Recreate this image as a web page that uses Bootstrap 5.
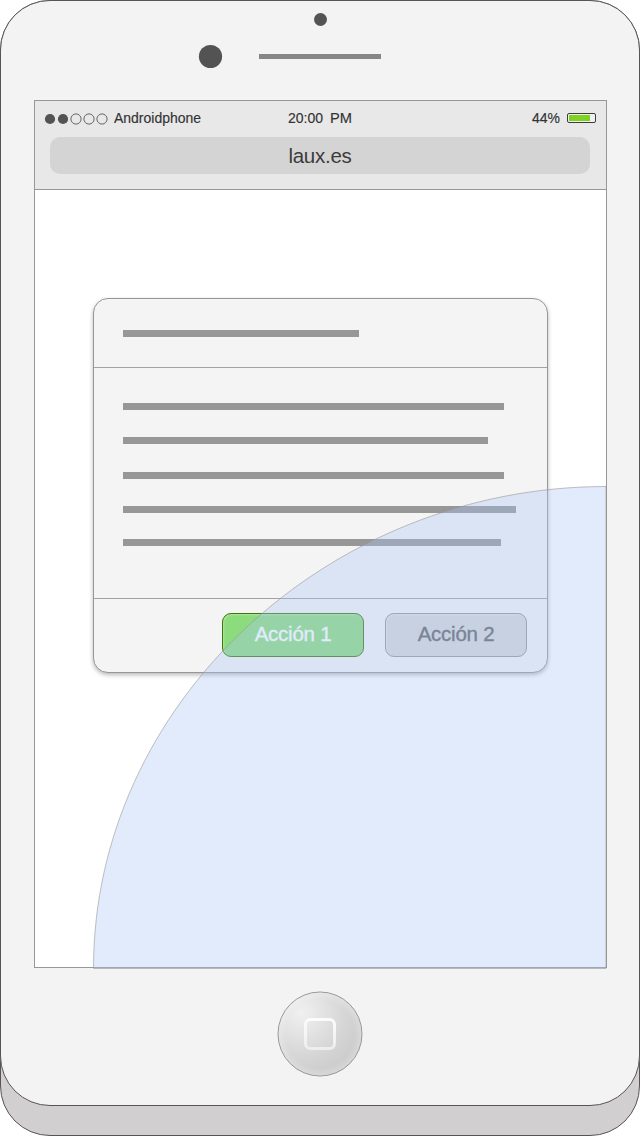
<!DOCTYPE html>
<html lang="es">
<head>
<meta charset="utf-8">
<meta name="viewport" content="width=device-width, initial-scale=1">
<title>laux.es</title>
<link href="https://cdn.jsdelivr.net/npm/bootstrap@5.3.0/dist/css/bootstrap.min.css" rel="stylesheet">
<style>
body { font-family: "Liberation Sans", Arial, sans-serif; background: #fff; color: #3c3c3c; }
.phone { width: 640px; height: 1136px; background: #d1cfcf; border: 1px solid #585354; border-radius: 50px; }
.face { width: 640px; height: 1106px; margin: -1px; background: #f3f3f3; border: 1px solid #585354; border-radius: 50px; }
.sensors { height: 99px; flex: none; }
.sensors svg { margin-left: -1px; margin-top: -1px; }
.screen { width: 573px; height: 868px; margin-left: 33px; border: 1px solid #979797; background: #fff; flex: none; }
.browser-bar { height: 89px; background: #e8e8e8; border-bottom: 1px solid #979797; }
.status { height: 36px; font-size: 14px; line-height: 16px; padding: 9px 10px 0 9px; }
.status text { fill: #333; stroke: #333; stroke-width: .15px; }
.address { height: 37px; margin: 0 16px 0 15px; border-radius: 10px; background: #d4d4d4; font-size: 20.5px; letter-spacing: -.25px; line-height: 38px; }
.dialog-card { width: 455px; height: 375px; margin: 108px 0 0 58px; background: #f4f4f4; border: 1px solid #979797; border-radius: 15px; box-shadow: 0 2px 4px rgba(0,0,0,.28); }
.dialog-head { height: 69px; padding: 31px 0 0 29px; border-bottom: 1px solid #a2a2a2; }
.dialog-text { height: 231px; padding: 35px 0 0 29px; border-bottom: 1px solid #a2a2a2; }
.line { height: 7px; background: #979797; }
.dialog-foot { padding: 14px 20px 0; gap: 21px; }
.action { width: 142px; height: 44px; padding: 0 0 2px; border-radius: 9px; font-size: 20.5px; letter-spacing: -.25px; line-height: 40px; -webkit-text-stroke: .35px currentColor; box-shadow: inset 1px 1px 2px rgba(255,255,255,.3); }
.action-main, .action-main:hover { background: #8cdc7e; border-color: #417505; color: #fff; }
.action-alt, .action-alt:hover { background: #d7d7d7; border-color: #979797; color: #616161; }
.reach { left: 58px; top: 385px; pointer-events: none; }
.home { margin: 23px 0 0 276px; }
</style>
</head>
<body>
<main class="phone">
  <div class="face d-flex flex-column">
    <div class="sensors">
      <svg width="638" height="99" viewBox="0 0 638 99" class="d-block">
        <circle cx="320.5" cy="19.5" r="6.5" fill="#535353"/>
        <circle cx="210.5" cy="56.5" r="11.6" fill="#535353"/>
        <path d="M259 54h122v5H259z" fill="#868686"/>
      </svg>
    </div>
    <div class="screen position-relative">
      <header class="browser-bar">
        <div class="status row g-0">
          <div class="col-5 d-flex">
            <svg width="66" height="18" viewBox="0 0 66 18">
              <g fill="#535353"><circle cx="6" cy="9" r="5.1"/><circle cx="19" cy="9" r="5.1"/></g>
              <g fill="none" stroke="#666" stroke-width="1"><circle cx="32" cy="9" r="5.1"/><circle cx="45" cy="9" r="5.1"/><circle cx="58" cy="9" r="5.1"/></g>
            </svg>
            <svg width="87" height="18" class="ms-1"><text x="0" y="13" textLength="87" lengthAdjust="spacingAndGlyphs">Androidphone</text></svg>
          </div>
          <div class="col-2 text-center"><svg width="66" height="18"><text x="1" y="13" textLength="35" lengthAdjust="spacingAndGlyphs">20:00</text><text x="43" y="13" textLength="22" lengthAdjust="spacingAndGlyphs">PM</text></svg></div>
          <div class="col-5 d-flex justify-content-end">
            <svg width="30" height="18"><text x="1" y="13" textLength="28" lengthAdjust="spacingAndGlyphs">44%</text></svg>
            <svg width="29" height="18" viewBox="0 0 29 18" style="margin-left:6px">
              <rect x=".5" y="3.5" width="28" height="9" rx="1.5" fill="#f0f0f0" stroke="#3c3c3c"/>
              <path d="M2 5h21v6H2z" fill="#7ed321"/>
            </svg>
          </div>
        </div>
        <div class="address text-center">laux.es</div>
      </header>
      <section class="dialog-card">
        <div class="dialog-head"><div class="line" style="width:236px"></div></div>
        <div class="dialog-text">
          <div class="line" style="width:381px"></div>
          <div class="line" style="width:365px;margin-top:27px"></div>
          <div class="line" style="width:381px;margin-top:28px"></div>
          <div class="line" style="width:393px;margin-top:27px"></div>
          <div class="line" style="width:378px;margin-top:26px"></div>
        </div>
        <div class="dialog-foot d-flex justify-content-end">
          <button type="button" class="btn action action-main">Acción 1</button>
          <button type="button" class="btn action action-alt">Acción 2</button>
        </div>
      </section>
      <svg class="reach position-absolute" width="514" height="484" viewBox="0 0 514 484">
        <path d="M.5 482.5C.5 219 234 .5 513 .5V482.5Z" fill="rgb(169,198,246)" fill-opacity=".35" stroke="#979797" stroke-opacity=".6"/>
      </svg>
    </div>
    <svg class="home" width="88" height="88" viewBox="0 0 88 88">
      <defs>
        <radialGradient id="dome" cx=".28" cy=".25" r=".85"><stop offset="0" stop-color="#f0f0f0"/><stop offset=".65" stop-color="#d4d4d4"/><stop offset="1" stop-color="#c9c9c9"/></radialGradient>
        <radialGradient id="rim"><stop offset=".82" stop-color="#fff" stop-opacity="0"/><stop offset="1" stop-color="#fff" stop-opacity=".25"/></radialGradient>
        <linearGradient id="key" x2="0" y2="1"><stop offset="0" stop-color="#fcfcfc"/><stop offset="1" stop-color="#ededed"/></linearGradient>
      </defs>
      <circle cx="43" cy="43" r="42" fill="url(#dome)" stroke="#979797"/>
      <circle cx="43" cy="43" r="41.5" fill="url(#rim)"/>
      <rect x="28.5" y="28.5" width="29" height="29" rx="5" fill="none" stroke="url(#key)" stroke-width="3"/>
    </svg>
  </div>
</main>
<script src="https://cdn.jsdelivr.net/npm/bootstrap@5.3.0/dist/js/bootstrap.bundle.min.js"></script>
</body>
</html>
